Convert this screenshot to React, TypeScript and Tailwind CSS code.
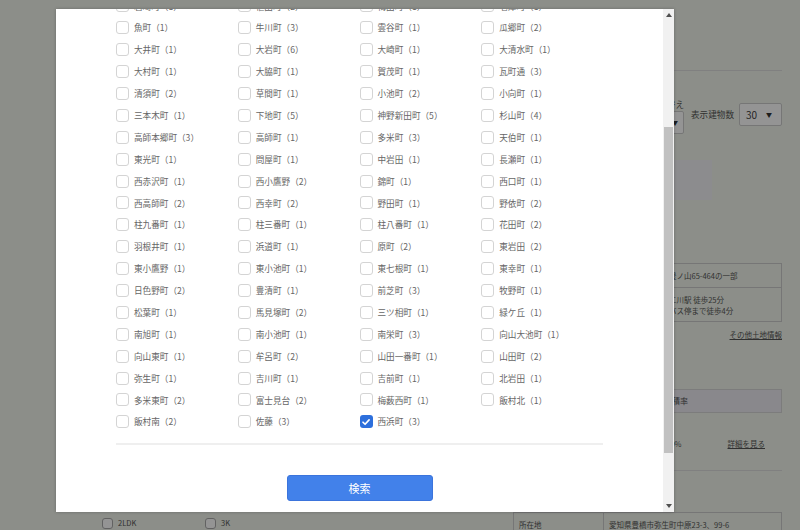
const towns: [string, number][] = [
  ["岩崎町", 1], ["植田町", 2], ["梅田町", 1], ["老津町", 1],
  ["魚町", 1], ["牛川町", 3], ["雲谷町", 1], ["瓜郷町", 2],
  ["大井町", 1], ["大岩町", 6], ["大崎町", 1], ["大清水町", 1],
  ["大村町", 1], ["大脇町", 1], ["賀茂町", 1], ["瓦町通", 3],
  ["清須町", 2], ["草間町", 1], ["小池町", 2], ["小向町", 1],
  ["三本木町", 1], ["下地町", 5], ["神野新田町", 5], ["杉山町", 4],
  ["高師本郷町", 3], ["高師町", 1], ["多米町", 3], ["天伯町", 1],
  ["東光町", 1], ["問屋町", 1], ["中岩田", 1], ["長瀬町", 1],
  ["西赤沢町", 1], ["西小鷹野", 2], ["錦町", 1], ["西口町", 1],
  ["西高師町", 2], ["西幸町", 2], ["野田町", 1], ["野依町", 2],
  ["柱九番町", 1], ["柱三番町", 1], ["柱八番町", 1], ["花田町", 2],
  ["羽根井町", 1], ["浜道町", 1], ["原町", 2], ["東岩田", 2],
  ["東小鷹野", 1], ["東小池町", 1], ["東七根町", 1], ["東幸町", 1],
  ["日色野町", 2], ["豊清町", 1], ["前芝町", 3], ["牧野町", 1],
  ["松葉町", 1], ["馬見塚町", 2], ["三ツ相町", 1], ["緑ケ丘", 1],
  ["南旭町", 1], ["南小池町", 1], ["南栄町", 3], ["向山大池町", 1],
  ["向山東町", 1], ["牟呂町", 2], ["山田一番町", 1], ["山田町", 2],
  ["弥生町", 1], ["吉川町", 1], ["吉前町", 1], ["北岩田", 1],
  ["多米東町", 2], ["富士見台", 2], ["梅薮西町", 1], ["飯村北", 1],
  ["飯村南", 2], ["佐藤", 3], ["西浜町", 3],
];

const font = { fontFamily: '"Noto Sans CJK JP", "Noto Sans", sans-serif' };

function CheckBox({ checked }: { checked?: boolean }) {
  if (checked) {
    return (
      <span className="flex h-[13px] w-[13px] shrink-0 items-center justify-center rounded-[3px] bg-[#2d6fdc]">
        <svg viewBox="0 0 12 12" className="h-[10px] w-[10px]">
          <path d="M2.4 6.3 4.9 8.7 9.7 3.5" stroke="white" strokeWidth="2" fill="none" strokeLinecap="round" strokeLinejoin="round" />
        </svg>
      </span>
    );
  }
  return <span className="h-[13px] w-[13px] shrink-0 rounded-[3px] border border-[#d4d4d4] bg-white" />;
}

function Arrow({ down }: { down?: boolean }) {
  return (
    <svg viewBox="0 0 6 4" className="h-[4px] w-[6px]">
      <path d={down ? "M0 0h6L3 4z" : "M0 4h6L3 0z"} fill="#505050" />
    </svg>
  );
}

function TownModal() {
  return (
    <div className="absolute inset-0 bg-[rgba(0,0,0,0.42)]">
      <div className="absolute left-[56px] top-[9px] flex h-[503px] w-[618px] overflow-hidden bg-white shadow-[0_0_3px_rgba(0,0,0,0.25)]">
        <div className="flex-1 overflow-hidden px-[60px]">
          <div className="-mt-[14px]">
            <div className="grid grid-cols-4 auto-rows-[21.9px]">
              {towns.map(([name, n]) => (
                <label key={name} className="flex items-center gap-[5px] text-[8.6px] text-[#666]">
                  <CheckBox checked={name === "西浜町"} />
                  <span>
                    {name}（{n}）
                  </span>
                </label>
              ))}
            </div>
            <div className="mt-[10px] border-t-2 border-[#efefef]" />
            <div className="mt-[30px] flex justify-center">
              <button className="h-[26px] w-[146px] rounded-[3px] border border-[#3b74dc] bg-[#4281ea] text-[11px] text-white">
                検索
              </button>
            </div>
          </div>
        </div>

        {/* scrollbar */}
        <div className="flex w-[11px] flex-col items-center bg-[#f1f1f1]">
          <div className="flex h-[12px] items-center">
            <Arrow />
          </div>
          <div className="h-[106px]" />
          <div className="h-[326px] w-[9px] bg-[#c1c1c1]" />
          <div className="flex-1" />
          <div className="flex h-[12px] items-center">
            <Arrow down />
          </div>
        </div>
      </div>
    </div>
  );
}

function Page() {
  return (
    <div className="flex pl-[90px] text-[7.5px] text-[#555]">
      {/* left column */}
      <div className="flex w-[400px] flex-col">
        <div className="h-[513px]" />
        <div className="flex h-[20px] items-center pl-[12px]">
          {["2LDK", "3K"].map((p) => (
            <div key={p} className="flex w-[103px] items-center gap-[5px]">
              <span className="h-[11px] w-[11px] rounded-[3px] border border-[#aaa] bg-white" />
              <span>{p}</span>
            </div>
          ))}
        </div>
      </div>

      {/* right column */}
      <div className="ml-[23px] flex w-[269px] flex-col">
        <div className="h-[71px] border-b border-[#dcdcdc]" />

        <div className="mt-[26px] flex items-start justify-end gap-[7px]">
          <div className="flex w-[84px] flex-col items-end">
            <span className="text-[8.6px] leading-[14px]">並び替え</span>
            <div className="flex h-[23px] w-[84px] items-center justify-end rounded-[2px] border border-[#ccc] bg-white pr-[5px] text-[6px] text-[#333]">
              ▼
            </div>
          </div>
          <div className="mt-[6px] flex items-center gap-[5px]">
            <span className="text-[8.6px]">表示建物数</span>
            <div className="flex h-[23px] w-[43px] items-center rounded-[2px] border border-[#ccc] bg-white text-[10px] text-[#444]">
              <span className="flex-1 pl-[6px]">30</span>
              <span className="pr-[9px] text-[6px] text-[#333]">▼</span>
            </div>
          </div>
        </div>

        <div className="mt-[26px] h-[40px] w-[199px] bg-[#f2f1f5]" />

        <div className="mt-[63px] border border-[#ccc]">
          <div className="flex h-[24px] items-center border-b border-[#ccc]">
            <span className="w-[90px] shrink-0 pl-[5px]">地番</span>
            <span className="whitespace-nowrap pl-[5px]">豊橋市弥生町字東豊ノ山65-464の一部</span>
          </div>
          <div className="flex h-[33px] items-center">
            <span className="w-[90px] shrink-0 pl-[5px]">交通</span>
            <div className="flex flex-col whitespace-nowrap pl-[5px] leading-[11px]">
              <span>ＪＲ東海道本線　二川駅 徒歩25分</span>
              <span>豊鉄バス「中原」バス停まで徒歩4分</span>
            </div>
          </div>
        </div>

        <div className="mt-[7px] flex justify-end">
          <span className="underline">その他土地情報</span>
        </div>

        <div className="mt-[49px] flex h-[24px] items-center justify-center border border-[#d6d6d6] bg-[#ecebf1] pl-[17px] text-[8px]">
          建ぺい率・容積率
        </div>

        <div className="mt-[20px] flex h-[20px] items-center justify-end gap-[46px] pr-[17px]">
          <span>60%／200%</span>
          <span className="underline">詳細を見る</span>
        </div>

        <div className="mt-[17px] border-t border-[#dcdcdc]" />

        <div className="mt-[41px] flex h-[24px] items-center border border-[#ccc]">
          <span className="w-[90px] shrink-0 self-stretch border-r border-[#ccc] pl-[5px] leading-[24px]">所在地</span>
          <span className="whitespace-nowrap pl-[5px]">愛知県豊橋市弥生町中原23-3、99-6</span>
        </div>
      </div>
    </div>
  );
}

export default function App() {
  return (
    <div className="relative h-[530px] w-[800px] overflow-hidden bg-[#f1f5ec]" style={font}>
      <Page />
      <TownModal />
    </div>
  );
}
